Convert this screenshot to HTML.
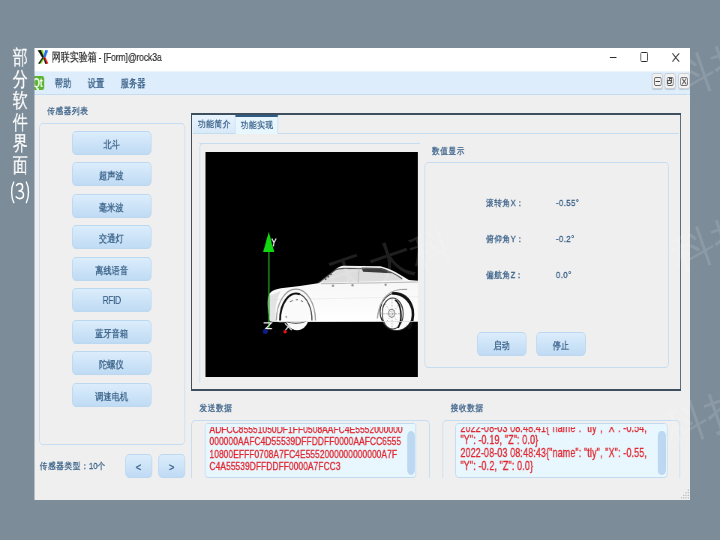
<!DOCTYPE html>
<html><head><meta charset="utf-8">
<style>
*{margin:0;padding:0;box-sizing:border-box;}
html,body{width:720px;height:540px;overflow:hidden;background:#7d8c99;font-family:"Liberation Sans",sans-serif;}
.a{position:absolute;}
.S{position:absolute;left:0;top:0;width:960px;height:540px;transform:scaleX(.75);transform-origin:0 0;will-change:transform;}
.side{left:16px;top:47.3px;width:21px;color:#fff;font-size:19.5px;line-height:21.5px;text-align:center;-webkit-text-stroke:0.25px #fff;}
.win{left:45.33px;top:48px;width:874.67px;height:452px;background:#efefef;overflow:hidden;}
.title{left:0;top:0;width:874.67px;height:23px;background:#fff;}
.menu{left:0;top:23px;width:874.67px;height:24px;background:#ddedfb;border-top:1px solid #eaf4fd;border-bottom:1px solid #c6dcf0;}
.t{color:#365e86;font-size:10.5px;line-height:10.5px;white-space:nowrap;transform:scaleY(.89);transform-origin:0 25%;-webkit-text-stroke:0.3px #365e86;}
.gb{border:1px solid #c5dcf1;border-radius:5px;}
.btn{border:1px solid #bcd8f1;border-radius:5px;background:linear-gradient(#dcedfc,#bfdbf4);color:#365e86;font-size:10.5px;text-align:center;-webkit-text-stroke:0.3px #365e86;}
.te{background:#e8f6fe;border:1px solid #c2daf0;border-radius:4px;overflow:hidden;}
.red{color:#e2252d;white-space:nowrap;-webkit-text-stroke:0.3px #e2252d;}
.wm{font-size:44px;line-height:44px;color:rgba(255,255,255,.12);white-space:nowrap;transform:rotate(-19deg);transform-origin:22px 22px;}
.bt{display:inline-block;transform:scaleY(.93);}
.sb{border-radius:5px;background:#bcd8f1;}
</style></head><body>
<svg class="a" style="left:0;top:170px" width="40" height="40" viewBox="0 170 40 40">
  <path d="M13.8,182 C10.9,187.5 10.9,197 13.8,202.6" stroke="#fff" stroke-width="1.35" fill="none" stroke-linecap="round"/>
  <path d="M26.3,182 C29.2,187.5 29.2,197 26.3,202.6" stroke="#fff" stroke-width="1.35" fill="none" stroke-linecap="round"/>
  <path d="M16.5,185.4 C17.3,184 18.6,183.4 19.8,183.4 C21.6,183.4 22.6,184.8 22.6,186.8 C22.6,189.3 21.1,190.9 18.9,190.9 C21.9,190.9 23.5,192.4 23.5,194.8 C23.5,197.3 21.9,198.6 19.8,198.6 C18.3,198.6 17,198 16.2,196.9" stroke="#fff" stroke-width="1.55" fill="none" stroke-linecap="round" stroke-linejoin="round"/>
</svg>
<div class="S">
<div class="a side">部<br>分<br>软<br>件<br>界<br>面</div>


<div class="a win">
  <div class="a" style="left:0;top:0;width:0.9px;height:452px;background:#7d8c99;z-index:5"></div>
  <div class="a title">
    <svg class="a" style="left:5px;top:2px" width="15" height="14" viewBox="0 0 15 14">
      <polygon points="3.5,0 7.2,0 9.2,6.6 7.6,7.4" fill="#7ee01a"/>
      <polygon points="0.3,0.2 4.4,0 8.4,7.2 6.6,8" fill="#111"/>
      <polygon points="10.2,0 14.2,0.4 10.6,7.4 7.8,6.9" fill="#2a6ef0"/>
      <polygon points="7,7.4 9.6,8 5.2,13.6 1.8,13.8" fill="#7ad81a"/>
      <polygon points="6.4,7.6 7.6,7.9 3,13.8 0.8,13.5" fill="#111"/>
      <polygon points="8.2,7 10.8,7.4 14.4,13.4 11.2,13.9" fill="#ee1a1a"/>
      <polygon points="7.6,7.2 9,7.5 12,13.9 10.2,13.8" fill="#111"/>
    </svg>
    <div class="a" style="left:24px;top:3.8px;font-size:11.5px;line-height:11.5px;letter-spacing:-0.17px;color:#2a2a2a;white-space:nowrap;-webkit-text-stroke:0.2px #2a2a2a;">网联实验箱 - [Form]@rock3a</div>
    <div class="a" style="left:767.7px;top:9px;width:8.7px;height:1.3px;background:#2e2e2e"></div>
    <div class="a" style="left:808.3px;top:4.3px;width:10px;height:9.7px;border:1.3px solid #2e2e2e;border-radius:1.5px"></div>
    <svg class="a" style="left:851px;top:4.9px" width="10" height="9" viewBox="0 0 10 9"><path d="M0.5 0.3 L9.5 8.7 M9.5 0.3 L0.5 8.7" stroke="#2e2e2e" stroke-width="1.1"/></svg>
  </div>
  <div class="a menu">
    <div class="a" style="left:0;top:4px;width:13.2px;height:14.2px;background:#5db432;border-radius:0 3px 3px 0;overflow:hidden;"><div class="a" style="right:1.9px;top:0;color:#f4fff0;font-size:12px;line-height:14.5px;font-weight:bold;letter-spacing:-0.3px;">Qt</div></div>
    <div class="a t" style="left:27.5px;top:6px;font-size:11px;line-height:11px;-webkit-text-stroke:0.3px #365e86;transform:none;">帮助</div>
    <div class="a t" style="left:71.9px;top:6px;font-size:11px;line-height:11px;-webkit-text-stroke:0.3px #365e86;transform:none;">设置</div>
    <div class="a t" style="left:115.5px;top:6px;font-size:11px;line-height:11px;-webkit-text-stroke:0.3px #365e86;transform:none;">服务器</div>
    <div class="a" style="left:823.9px;top:1px;width:15px;height:16px;border:1px solid #c9ced3;background:#f2f2f2;border-radius:3px;box-shadow:0 1px 1px rgba(0,0,0,.15)"><div class="a" style="left:2px;top:2.5px;width:9.5px;height:9.8px;border:1px solid #666;border-radius:2px;"></div><div class="a" style="left:4px;top:6.8px;width:5.5px;height:1.3px;background:#444;"></div></div>
    <div class="a" style="left:840.5px;top:1px;width:15.3px;height:16px;border:1px solid #c9ced3;background:#f2f2f2;border-radius:3px;box-shadow:0 1px 1px rgba(0,0,0,.15)"><div class="a" style="left:2px;top:2.5px;width:9.5px;height:9.8px;border:1px solid #666;border-radius:2px;"></div><div class="a" style="left:5px;top:4px;width:4.5px;height:4.5px;border:1px solid #555;"></div><div class="a" style="left:3.5px;top:5.5px;width:4.5px;height:4.5px;border:1px solid #555;background:#f2f2f2"></div></div>
    <div class="a" style="left:858.8px;top:1px;width:16px;height:16px;border:1px solid #c9ced3;background:#f2f2f2;border-radius:3px;box-shadow:0 1px 1px rgba(0,0,0,.15)"><div class="a" style="left:2px;top:2.5px;width:9.5px;height:9.8px;border:1px solid #666;border-radius:2px;"></div><svg class="a" style="left:3.5px;top:4px" width="6.5" height="6.8" viewBox="0 0 6.5 6.8"><path d="M0.5 0.5 L6 6.3 M6 0.5 L0.5 6.3" stroke="#444" stroke-width="1.1"/></svg></div>
  </div>

  <!-- sensor list -->
  <div class="a t" style="left:17.6px;top:57.8px;font-size:10.5px;line-height:10.5px;">传感器列表</div>
  <div class="a gb" style="left:6.5px;top:74.5px;width:195px;height:322.8px;"></div>
  <div class="a btn" style="left:50.5px;top:82.8px;width:105.8px;height:24px;line-height:24.5px;"><span class="bt">北斗</span></div>
  <div class="a btn" style="left:50.5px;top:114.3px;width:105.8px;height:24px;line-height:24.5px;"><span class="bt">超声波</span></div>
  <div class="a btn" style="left:50.5px;top:145.8px;width:105.8px;height:24px;line-height:24.5px;"><span class="bt">毫米波</span></div>
  <div class="a btn" style="left:50.5px;top:177.3px;width:105.8px;height:24px;line-height:24.5px;"><span class="bt">交通灯</span></div>
  <div class="a btn" style="left:50.5px;top:208.8px;width:105.8px;height:24px;line-height:24.5px;"><span class="bt">离线语音</span></div>
  <div class="a btn" style="left:50.5px;top:240.3px;width:105.8px;height:24px;line-height:22.6px;font-size:11.5px;letter-spacing:-0.7px;-webkit-text-stroke:0.1px #365e86;">RFID</div>
  <div class="a btn" style="left:50.5px;top:271.8px;width:105.8px;height:24px;line-height:24.5px;"><span class="bt">蓝牙音箱</span></div>
  <div class="a btn" style="left:50.5px;top:303.3px;width:105.8px;height:24px;line-height:24.5px;"><span class="bt">陀螺仪</span></div>
  <div class="a btn" style="left:50.5px;top:334.8px;width:105.8px;height:24px;line-height:24.5px;"><span class="bt">调速电机</span></div>
  <div class="a t" style="left:7.2px;top:412.5px;">传感器类型：10个</div>
  <div class="a btn" style="left:121.6px;top:405.6px;width:35.7px;height:24.4px;line-height:25px;font-size:12.5px;"><span class="bt">&lt;</span></div>
  <div class="a btn" style="left:165.6px;top:405.6px;width:35.9px;height:24.4px;line-height:25px;font-size:12.5px;"><span class="bt">&gt;</span></div>

  <!-- tab widget -->
  <div class="a" style="left:209.7px;top:65.3px;width:652.8px;height:278px;border:2px solid #3e4f60;border-left-width:1.6px;border-right-width:1.6px;"></div>
  <div class="a" style="left:211.7px;top:85.3px;width:648px;height:1px;background:#c4dcf0;"></div>
  <div class="a" style="left:211.5px;top:67.3px;width:57px;height:18px;background:linear-gradient(#e9f4fd,#d8e9f8);border-right:1px solid #c4dcf0;"></div>
  <div class="a t" style="left:219px;top:71px;">功能简介</div>
  <div class="a" style="left:268.4px;top:66.5px;width:57px;height:19.8px;background:#e8f6fe;border-top:2.2px solid #2f5b84;border-right:1px solid #c4dcf0;"></div>
  <div class="a t" style="left:276px;top:72px;">功能实现</div>

  <div class="a gb" style="left:220.7px;top:95.3px;width:294px;height:240px;border-bottom:none;border-right:none;border-radius:5px 0 0 0"></div>
  <div class="a" style="left:220.7px;top:95.3px;width:291px;height:1px;background:#c5dcf1;"></div>
  <div class="a" style="left:228.4px;top:104.2px;width:283.3px;height:224.8px;background:#000;overflow:hidden;">
    <svg class="a" style="left:0;top:0" width="283.3" height="224.8" viewBox="205.8 152.2 212 224.8" preserveAspectRatio="none">
      <defs>
        <linearGradient id="body" x1="0" y1="0" x2="0" y2="1"><stop offset="0" stop-color="#f4f4f4"/><stop offset="1" stop-color="#ffffff"/></linearGradient>
        <linearGradient id="arr" x1="0" y1="0" x2="1" y2="0"><stop offset="0" stop-color="#10a010"/><stop offset=".5" stop-color="#40f040"/><stop offset="1" stop-color="#10a010"/></linearGradient>
      </defs>
      <!-- car body -->
      <path d="M267.9,300 C268,293 272,290 281,288.5 L300,286.3 L318,283.5 L334.7,270.7 C337,268 340,266.2 343,266 L380,266.5 C390,268 400,275 408.7,280.2 L417.8,281 L417.8,321.5 L280,322.5 L270,321.5 C268,315 267.5,305 267.9,300 Z" fill="url(#body)"/>
      <!-- windows -->
      <path d="M321,283 L336,271.5 C339,269.5 341,269 344,269 L380,269.5 C390,271 398,276 404,280.5 L321,283 Z" fill="#dcdcdc"/>
      <path d="M361.5,267.6 L381,268.2 C386,269.5 390,271.5 392,273.5 L363,272 Z" fill="#3a3a3a"/>
      <path d="M318.5,283.3 L335,270.5 C338,268.8 341,268.6 344,268.6 L380,269 C389,270.5 396,274.5 402,279" stroke="#555" stroke-width="1.1" fill="none"/>
      <path d="M359,269 L358,283" stroke="#bbb" stroke-width="0.8" fill="none"/>
      <path d="M325,280 L332,274" stroke="#444" stroke-width="1" stroke-dasharray="2 1.5" fill="none"/>
      <path d="M321,284 L417.8,282.3" stroke="#b8b8b8" stroke-width="1" fill="none"/>
      <path d="M272,300 L417.8,297" stroke="#eeeeee" stroke-width="1" fill="none"/>
      <!-- wheels -->
      <path d="M270,296 C269,303 268.5,313 270.5,321.5 L276,321.5 C275,310 276,300 281,291 Z" fill="#d4d4d4" opacity=".6"/>
      <ellipse cx="297.2" cy="314" rx="12.5" ry="16.5" fill="#fafafa"/>
      <path d="M287,322 C292,324 300,324 306,321.5" stroke="#333" stroke-width="0.9" fill="none"/>
      <path d="M290,302 L293,300.5 M296,300 L298,300 M301,300.5 L303,302 M286,316 L286.5,318" stroke="#666" stroke-width="0.9" fill="none"/>
      <path d="M276.5,320.8 A19.5,31.5 0 0 1 315.5,320.8" stroke="#9a9a9a" stroke-width="1.1" fill="none"/>
      <path d="M280.2,320.8 A16,26.5 0 0 1 300,294.5" stroke="#111" stroke-width="2" fill="none"/>
      <path d="M300,294.5 A16,26.5 0 0 1 312,320.8" stroke="#444" stroke-width="1.1" fill="none"/>
      <ellipse cx="396.5" cy="312" rx="16.5" ry="18.8" fill="#fbfbfb" stroke="#222" stroke-width="0.9"/>
      <path d="M392,293.6 C402,293 410,300 412.5,310 C413.5,317 412,325 408,329" stroke="#111" stroke-width="2.6" fill="none"/>
      <ellipse cx="392.5" cy="313.8" rx="10.5" ry="15.5" fill="none" stroke="#333" stroke-width="1"/>
      <path d="M395,300 C401,304 403,318 398,328" stroke="#111" stroke-width="1.6" fill="none"/>
      <path d="M385,304 L399,324 M385,324 L399,304 M392,299 L392,329 M383,314 L401,314" stroke="#888" stroke-width="0.6" stroke-dasharray="1.5 1.5"/>
      <ellipse cx="391.5" cy="313.5" rx="3" ry="4" fill="none" stroke="#666" stroke-width="0.8"/>
      <path d="M377.3,318.7 C379,300 388,291 400,289.7 L407,289.5" stroke="#a0a0a0" stroke-width="1.2" fill="none"/>
      <path d="M272,321.8 L417.8,321.8" stroke="#d8d8d8" stroke-width="0.8"/>
      <circle cx="333" cy="286" r="1.2" fill="#999"/><circle cx="352.5" cy="285.5" r="1.2" fill="#999"/><circle cx="385.5" cy="285" r="1.2" fill="#999"/>
      <!-- axes -->
      <rect x="268.4" y="251" width="1.3" height="78" fill="#1fa01f"/>
      <path d="M268.9,231.9 L274.4,252.2 L263.3,252.2 Z" fill="#12d812"/>
      <path d="M272,238.6 L274.1,243 L276.3,238.6 M274.1,243 L273.4,246.6" stroke="#f0f0f0" stroke-width="1.1" fill="none"/>
      <path d="M263.8,323 L271.6,323 L265.9,328.8 L272.2,328.8" stroke="#f2f2f2" stroke-width="1.2" fill="none"/>
      <path d="M285,323.6 L291.8,330.4 M291.2,323.6 L285.6,330.4" stroke="#e8e8e8" stroke-width="1.2" fill="none"/>
      <circle cx="265.5" cy="331.7" r="2.5" fill="#0e1c86"/>
      <circle cx="285.2" cy="332" r="1.7" fill="#f01010"/>
    </svg>
  </div>

  <div class="a t" style="left:530.7px;top:98px;">数值显示</div>
  <div class="a gb" style="left:520.4px;top:114px;width:326.2px;height:205.6px;"></div>
  <div class="a t" style="left:602.3px;top:150px;">滚转角X：</div>
  <div class="a t" style="left:696px;top:150px;letter-spacing:0.5px;">-0.55°</div>
  <div class="a t" style="left:602.3px;top:186px;">俯仰角Y：</div>
  <div class="a t" style="left:696px;top:186px;letter-spacing:0.5px;">-0.2°</div>
  <div class="a t" style="left:602.3px;top:222px;">偏航角Z：</div>
  <div class="a t" style="left:696px;top:222px;letter-spacing:0.5px;">0.0°</div>
  <div class="a btn" style="left:590.8px;top:284px;width:65.9px;height:24px;line-height:25px;"><span class="bt">启动</span></div>
  <div class="a btn" style="left:669.9px;top:284px;width:65.9px;height:24px;line-height:25px;"><span class="bt">停止</span></div>

  <!-- send/recv -->
  <div class="a t" style="left:220.5px;top:355px;">发送数据</div>
  <div class="a gb" style="left:210px;top:371.5px;width:317.3px;height:58.5px;border-bottom:none;border-radius:5px 5px 0 0;"></div>
  <div class="a te" style="left:227.5px;top:375.4px;width:282.3px;height:55px;">
    <div class="a red" style="left:5.5px;top:-1.8px;font-size:11.2px;line-height:12.5px;letter-spacing:0.1px;">ADFCC85551050DF1FF0508AAFC4E5552000000<br>000000AAFC4D55539DFFDDFF0000AAFCC6555<br>10800EFFF0708A7FC4E5552000000000000A7F<br>C4A55539DFFDDFF0000A7FCC3</div>
    <div class="a" style="left:0;top:0;width:282px;height:2.5px;background:#e8f6fe;"></div>
    <div class="a sb" style="left:269px;top:6.4px;width:10.4px;height:44.2px;"></div>
  </div>
  <div class="a t" style="left:555.7px;top:354.5px;">接收数据</div>
  <div class="a gb" style="left:544.7px;top:371.5px;width:317.3px;height:58.5px;border-bottom:none;border-radius:5px 5px 0 0;"></div>
  <div class="a te" style="left:562.1px;top:375.4px;width:282.6px;height:55px;">
    <div class="a red" style="left:5.5px;top:-2.8px;font-size:11.9px;line-height:12.85px;letter-spacing:0.2px;">2022-08-03 08:48:41{"name": "tly", "X": -0.54,<br>"Y": -0.19, "Z": 0.0}<br>2022-08-03 08:48:43{"name": "tly", "X": -0.55,<br>"Y": -0.2, "Z": 0.0}</div>
    <div class="a" style="left:0;top:0;width:282px;height:2.5px;background:#e8f6fe;"></div>
    <div class="a sb" style="left:268.9px;top:6.4px;width:11px;height:44.5px;"></div>
  </div>
</div>
</div>
<svg class="a" style="left:680px;top:488px" width="10" height="12" viewBox="680 488 10 12"><rect x="687.8" y="489.7" width="1" height="1" fill="#a0a0a0"/><rect x="685.5" y="492.2" width="1" height="1" fill="#a0a0a0"/><rect x="687.8" y="492.2" width="1" height="1" fill="#a0a0a0"/><rect x="683.3" y="494.8" width="1" height="1" fill="#a0a0a0"/><rect x="685.5" y="494.8" width="1" height="1" fill="#a0a0a0"/><rect x="687.8" y="494.8" width="1" height="1" fill="#a0a0a0"/><rect x="681.1" y="497.4" width="1" height="1" fill="#a0a0a0"/><rect x="683.3" y="497.4" width="1" height="1" fill="#a0a0a0"/><rect x="685.5" y="497.4" width="1" height="1" fill="#a0a0a0"/><rect x="687.8" y="497.4" width="1" height="1" fill="#a0a0a0"/></svg>
<div class="a" style="left:0;top:0;width:720px;height:540px;overflow:hidden;pointer-events:none;">
  <div class="a wm" style="left:327px;top:255px;">天大科</div>
  <div class="a wm" style="left:671px;top:54px;">科技</div>
  <div class="a wm" style="left:671px;top:228px;">科技</div>
  <div class="a wm" style="left:664px;top:402px;">科技</div>
</div>
</body></html>
